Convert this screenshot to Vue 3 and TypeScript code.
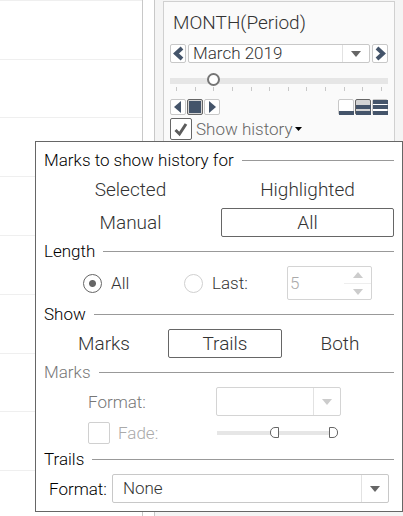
<script setup lang="ts">
import { ref } from 'vue'

const months: string[] = [
  'January 2019', 'February 2019', 'March 2019', 'April 2019',
  'May 2019', 'June 2019', 'July 2019', 'August 2019',
  'September 2019', 'October 2019', 'November 2019', 'December 2019',
]
const month = ref<number>(2)
const showHistory = ref<boolean>(true)

const scopes = ['Selected', 'Highlighted', 'Manual', 'All'] as const
const scope = ref<(typeof scopes)[number]>('All')

const length = ref<'all' | 'last'>('all')
const lastCount = ref<number>(5)

const shows = ['Marks', 'Trails', 'Both'] as const
const show = ref<(typeof shows)[number]>('Trails')

const fade = ref<boolean>(false)
const fadeFrom = ref<number>(47)
const fadeTo = ref<number>(100)
const trailFormat = ref<string>('None')

function step(delta: number): void {
  month.value = Math.min(months.length - 1, Math.max(0, month.value + delta))
}
</script>

<template>
  <div class="page">
    <div class="plot">
      <div v-for="n in 9" :key="n" class="band"></div>
    </div>

    <aside class="side">
      <section class="card">
        <h2 class="title">MONTH(Period)</h2>

        <div class="picker">
          <button type="button" class="nav" aria-label="Previous" @click="step(-1)">
            <svg viewBox="0 0 14 17" width="14" height="17"><path d="M11 3 5 8.500l6 5.500" /></svg>
          </button>
          <span class="select">
            <select v-model.number="month" aria-label="Month">
              <option v-for="(m, i) in months" :key="m" :value="i">{{ m }}</option>
            </select>
            <span class="drop"><svg viewBox="0 0 10 6" width="10" height="6"><path d="M0 0h10L5 6z" /></svg></span>
          </span>
          <button type="button" class="nav" aria-label="Next" @click="step(1)">
            <svg viewBox="0 0 14 17" width="14" height="17"><path d="M4 3 10 8.500 4 14" /></svg>
          </button>
        </div>

        <input v-model.number="month" class="timeline" type="range" min="0" max="11" aria-label="Period" />
        <div class="ticks"><i v-for="m in months" :key="m"></i></div>

        <div class="controls">
          <button type="button" class="mini" aria-label="Play backwards">
            <svg viewBox="0 0 14 14" width="14" height="14"><path d="M3 7l7-6v12z" /></svg>
          </button>
          <button type="button" class="mini on" aria-label="Stop">
            <svg viewBox="0 0 14 14" width="14" height="14"><path d="M1 1h12v12H1z" /></svg>
          </button>
          <button type="button" class="mini" aria-label="Play forwards">
            <svg viewBox="0 0 14 14" width="14" height="14"><path d="M11 7L4 1v12z" /></svg>
          </button>
          <span class="spacer"></span>
          <button type="button" class="speed" aria-label="Slow">
            <svg viewBox="0 0 16 16" width="16" height="16">
              <rect x=".5" y=".5" width="15" height="15" rx="1.500" fill="#fff" stroke="#c8c8c8" />
              <path d="M1 12h15v4H1z" />
            </svg>
          </button>
          <button type="button" class="speed" aria-label="Normal">
            <svg viewBox="0 0 16 16" width="16" height="16">
              <rect x=".5" y=".5" width="15" height="15" rx="1.500" fill="#d4d4d4" stroke="#666" />
              <path d="M1 6h15v4H1zM1 12h15v4H1z" />
            </svg>
          </button>
          <button type="button" class="speed" aria-label="Fast">
            <svg viewBox="0 0 16 16" width="16" height="16">
              <rect x=".5" y=".5" width="15" height="15" rx="1.500" fill="#fff" stroke="#c8c8c8" />
              <path d="M1 1h15v4H1zM1 6h15v4H1zM1 12h15v4H1z" />
            </svg>
          </button>
        </div>

        <div class="history">
          <label class="check">
            <span class="box">
              <input v-model="showHistory" type="checkbox" />
              <svg v-if="showHistory" viewBox="0 0 22 22" width="22" height="22"><path d="M5.500 12 9.500 16 16 6" /></svg>
            </span>
            <span>Show history</span>
          </label>
          <button type="button" class="more" aria-label="History options">
            <svg viewBox="0 0 7 4" width="7" height="4"><path d="M0 0h7L3.500 4z" /></svg>
          </button>
        </div>
      </section>
    </aside>

    <form class="popup" @submit.prevent>
      <h3 class="head">Marks to show history for</h3>
      <div class="pair">
        <button
          v-for="s in scopes" :key="s" type="button" class="choice"
          :class="{ picked: s === scope }" @click="scope = s"
        >{{ s }}</button>
      </div>

      <h3 class="head">Length</h3>
      <div class="length">
        <label class="radio"><input v-model="length" type="radio" name="length" value="all" />All</label>
        <label class="radio dim"><input v-model="length" type="radio" name="length" value="last" />Last:</label>
        <span class="spin">
          <input v-model.number="lastCount" type="number" min="1" aria-label="Last count" disabled />
          <span class="steps">
            <button type="button" aria-label="Increase" disabled>
              <svg viewBox="0 0 10 6" width="10" height="6"><path d="M0 6h10L5 0z" /></svg>
            </button>
            <button type="button" aria-label="Decrease" disabled>
              <svg viewBox="0 0 10 6" width="10" height="6"><path d="M0 0h10L5 6z" /></svg>
            </button>
          </span>
        </span>
      </div>

      <h3 class="head">Show</h3>
      <div class="trio">
        <button
          v-for="s in shows" :key="s" type="button" class="choice"
          :class="{ picked: s === show }" @click="show = s"
        >{{ s }}</button>
      </div>

      <h3 class="head muted">Marks</h3>
      <div class="marks">
        <label class="off" for="marks-format">Format:</label>
        <span class="select large disabled">
          <select id="marks-format" disabled></select>
          <span class="drop"><svg viewBox="0 0 10 6" width="10" height="6"><path d="M0 0h10L5 6z" /></svg></span>
        </span>
      </div>
      <div class="marks fade">
        <label class="check faint">
          <span class="box"><input v-model="fade" type="checkbox" disabled /></span>
          <span>Fade:</span>
        </label>
        <span class="dual">
          <input v-model.number="fadeFrom" type="range" class="from" aria-label="Fade from" disabled />
          <input v-model.number="fadeTo" type="range" class="to" aria-label="Fade to" disabled />
        </span>
      </div>

      <h3 class="head">Trails</h3>
      <div class="trails">
        <label for="trail-format">Format:</label>
        <span class="select large">
          <select id="trail-format" v-model="trailFormat"><option>None</option></select>
          <span class="drop"><svg viewBox="0 0 10 6" width="10" height="6"><path d="M0 0h10L5 6z" /></svg></span>
        </span>
      </div>
    </form>
  </div>
</template>

<style>
body {
  margin: 0;
  background: #fff;
}
</style>

<style scoped>
* {
  box-sizing: border-box;
}
.page {
  position: relative;
  display: flex;
  gap: 11px;
  height: 100vh;
  min-height: 512px;
  overflow: hidden;
  font: 300 17px/20px Roboto, "Liberation Sans", sans-serif;
  color: #333;
}
button, input, select {
  margin: 0;
  padding: 0;
  font: inherit;
  color: inherit;
}
button {
  display: grid;
  place-items: center;
  border: 0;
  background: none;
}
svg {
  display: block;
}

/* chart area behind the panel */
.plot {
  flex: 0 0 143px;
  border-right: 1px solid #c8c8c8;
}
.band {
  height: 59px;
  border-top: 1px solid #efefef;
}
.band:nth-child(5n + 2) {
  height: 58px;
}

/* filter card */
.side {
  flex: 1;
  min-width: 0;
  padding: 1px 8px 0;
  border-left: 1px solid #c8c8c8;
  background: #f4f4f4;
}
.card {
  padding: 9px 6px 8px;
  border: 1px solid #d0d0d0;
  background: #fafafa;
}
.title {
  margin: 0 0 9px 3px;
  font-size: 19px;
  line-height: 24px;
  font-weight: 300;
}
.picker {
  display: flex;
  gap: 2px;
  height: 19px;
}
.nav {
  width: 16px;
  border: 1px solid #c8c8c8;
  border-radius: 2px;
  background: #fff;
}
.nav path {
  fill: none;
  stroke: #44546a;
  stroke-width: 4;
}
.select {
  display: grid;
  flex: 1;
  min-width: 0;
  border: 1px solid #c8c8c8;
  border-radius: 2px;
  background: #fff;
}
.select select {
  grid-area: 1 / 1;
  appearance: none;
  min-width: 0;
  height: 17px;
  padding: 0 26px 0 4px;
  border: 0;
  background: none;
  line-height: 17px;
  opacity: 1;
}
.drop {
  grid-area: 1 / 1;
  justify-self: end;
  display: grid;
  place-items: center;
  width: 27px;
  border-left: 1px solid #e2e2e2;
  pointer-events: none;
}
.drop path {
  fill: #666;
}
.large select {
  height: 27px;
  padding-left: 10px;
}
.disabled {
  border-color: #d4d4d4;
}
.disabled .drop path {
  fill: #ccc;
}

.timeline {
  appearance: none;
  display: block;
  width: 100%;
  height: 13px;
  margin-top: 10px;
  background: linear-gradient(#e6e6e6, #e6e6e6) 0 5px / 100% 6px no-repeat;
}
.timeline::-webkit-slider-thumb {
  appearance: none;
  width: 13px;
  height: 13px;
  border: 2px solid #767676;
  border-radius: 50%;
  background: #fff;
}
.ticks {
  display: flex;
  justify-content: space-between;
  height: 4px;
  padding: 0 6px;
  margin: 1px 0 8px;
}
.ticks i {
  width: 1px;
  background: #c8c8c8;
}
.controls {
  display: flex;
  gap: 1px;
  margin-bottom: 3px;
}
.mini {
  width: 16px;
  height: 16px;
  border: 1px solid #c8c8c8;
  border-radius: 2px;
  background: #fff;
}
.mini.on {
  border-color: #666;
  background: #d4d4d4;
}
.mini path, .speed path {
  fill: #44546a;
}
.spacer {
  flex: 1;
}
.history {
  display: flex;
  align-items: center;
  gap: 3px;
  color: #666;
}
.check {
  display: flex;
  align-items: center;
  gap: 4px;
}
.box {
  display: grid;
}
.box input {
  grid-area: 1 / 1;
  appearance: none;
  width: 22px;
  height: 22px;
  border: 1px solid #666;
  border-radius: 2px;
  background: #fff;
}
.box svg {
  grid-area: 1 / 1;
  pointer-events: none;
}
.box path {
  fill: none;
  stroke: #5c5c5c;
  stroke-width: 3;
}
.more path {
  fill: #000;
}

/* history options */
.popup {
  position: absolute;
  top: 141px;
  left: 35px;
  right: 0;
  display: grid;
  gap: 4px;
  padding: 8px;
  border: 1px solid #666;
  background: #fff;
}
.head {
  display: flex;
  align-items: center;
  gap: 8px;
  margin: 0 0 1px;
  font-size: 17px;
  line-height: 20px;
  font-weight: 300;
  color: #000;
}
.head::after {
  content: "";
  flex: 1;
  height: 1px;
  background: #999;
}
.muted, .off {
  color: #777;
}
.pair {
  display: grid;
  grid-template-columns: 1fr 1fr;
  gap: 4px;
}
.trio {
  display: grid;
  grid-template-columns: 120fr 114fr 108fr;
  gap: 4px;
}
.choice {
  height: 29px;
  border: 1px solid transparent;
  border-radius: 2px;
  font-size: 19px;
}
.choice.picked {
  border-color: #666;
}
.length {
  display: grid;
  grid-template-columns: 101px 103px 85px;
  align-items: center;
  height: 34px;
  padding-left: 39px;
}
.radio {
  display: flex;
  align-items: center;
  gap: 9px;
}
.radio input {
  appearance: none;
  width: 19px;
  height: 19px;
  border: 1px solid #767676;
  border-radius: 50%;
}
.radio input:checked {
  border-color: #666;
  background: radial-gradient(circle, #666 3px, transparent 4px);
}
.dim input {
  border-color: #d0d0d0;
}
.spin {
  display: flex;
  height: 34px;
  border: 1px solid #d4d4d4;
  border-radius: 2px;
  color: #aaa;
}
.spin input {
  appearance: textfield;
  flex: 1;
  min-width: 0;
  padding-left: 2px;
  border: 0;
  background: none;
}
.steps {
  display: grid;
  grid-template-rows: 1fr 1fr;
  width: 27px;
}
.steps button + button {
  border-top: 1px solid #eee;
}
.steps path {
  fill: #ccc;
}
.marks {
  display: grid;
  grid-template-columns: 128px 125px;
  align-items: center;
  padding-left: 44px;
}
.fade {
  height: 25px;
}
.faint {
  gap: 8px;
  color: #aaa;
}
.faint input {
  border-color: #d0d0d0;
}
.dual {
  display: grid;
  margin: 0 3px 0 1px;
  background: linear-gradient(#e6e6e6, #e6e6e6) 0 50% / 100% 4px no-repeat;
}
.dual input {
  grid-area: 1 / 1;
  appearance: none;
  width: 100%;
  height: 12px;
  background: none;
}
.dual input::-webkit-slider-thumb {
  appearance: none;
  width: 9px;
  height: 11px;
  border: 1px solid #666;
  background: #fff;
}
.from::-webkit-slider-thumb {
  border-radius: 5px 0 0 5px;
}
.to::-webkit-slider-thumb {
  border-radius: 0 5px 5px 0;
}
.trails {
  display: flex;
  align-items: center;
  gap: 5px;
  padding: 0 5px;
  color: #000;
}
.trails select {
  color: #333;
}
</style>
